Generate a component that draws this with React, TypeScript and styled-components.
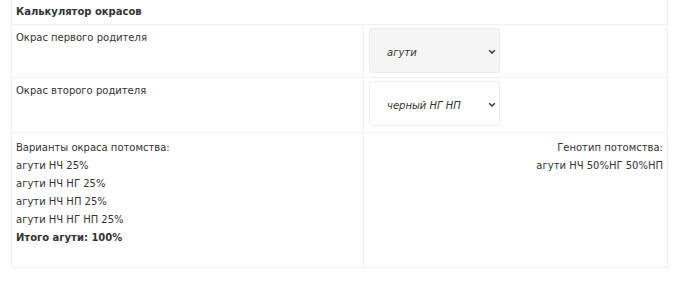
import React, { useState } from 'react';
import styled, { createGlobalStyle } from 'styled-components';

const GlobalStyle = createGlobalStyle`
  body {
    margin: 0;
    background: #ffffff;
    font-family: "DejaVu Sans", Verdana, sans-serif;
    color: #333333;
  }
`;

const Page = styled.div`
  padding: 0 14px 0 11px;
`;

const Table = styled.table`
  width: 657px;
  border-collapse: collapse;
  font-size: 10px;
  line-height: 16px;
`;

const Cell = styled.td<{ $align?: 'left' | 'right' }>`
  border: 1px solid #f0f0f0;
  padding: 5px 4px 4px;
  vertical-align: top;
  text-align: ${(p) => p.$align || 'left'};
`;

const HeadCell = styled(Cell)`
  border-top: none;
  font-weight: bold;
  padding: 4px 4px 4px;
`;

const SelectCell = styled(Cell)<{ $tall?: boolean }>`
  padding: 2px 4px ${(p) => (p.$tall ? 6 : 4)}px 5px;
  width: 294px;
`;

const SelectBox = styled.label<{ $active?: boolean }>`
  position: relative;
  display: flex;
  align-items: center;
  width: 131px;
  height: 45px;
  box-sizing: border-box;
  margin-top: 1px;
  border: 1px solid #ececec;
  border-radius: 3px;
  background: ${(p) => (p.$active ? '#f5f5f5' : '#ffffff')};
`;

const NativeSelect = styled.select`
  appearance: none;
  width: 100%;
  height: 100%;
  border: none;
  background: transparent;
  padding: 3px 20px 0 17px;
  font-family: "DejaVu Sans", Verdana, sans-serif;
  font-size: 10px;
  font-style: italic;
  color: #333333;
  outline: none;
`;

const Chevron = styled.svg`
  position: absolute;
  right: 3px;
  top: 50%;
  margin-top: -2px;
  pointer-events: none;
`;

const Lines = styled.div`
  line-height: 18px;
  padding: 1px 0 16px;
`;

const Strong = styled.div`
  font-weight: bold;
`;

const colors = ['агути', 'черный', 'черный НГ НП', 'голубой', 'белый'];

const ColorSelect = ({ value, active }: { value: string; active?: boolean }) => {
  const [v, setV] = useState(value);
  return (
    <SelectBox $active={active}>
      <NativeSelect value={v} onChange={(e) => setV(e.target.value)}>
        {colors.map((c) => (
          <option key={c} value={c}>{c}</option>
        ))}
      </NativeSelect>
      <Chevron width="8" height="6" viewBox="0 0 8 6">
        <path d="M1.2 1.3 L4 4.1 L6.8 1.3" fill="none" stroke="#333" strokeWidth="1.4" />
      </Chevron>
    </SelectBox>
  );
};

export default function App() {
  const variants = ['агути НЧ 25%', 'агути НЧ НГ 25%', 'агути НЧ НП 25%', 'агути НЧ НГ НП 25%'];
  return (
    <Page>
      <GlobalStyle />
      <Table>
        <tbody>
          <tr>
            <HeadCell colSpan={2}>Калькулятор окрасов</HeadCell>
          </tr>
          <tr>
            <Cell>Окрас первого родителя</Cell>
            <SelectCell>
              <ColorSelect value="агути" active />
            </SelectCell>
          </tr>
          <tr>
            <Cell>Окрас второго родителя</Cell>
            <SelectCell $tall>
              <ColorSelect value="черный НГ НП" />
            </SelectCell>
          </tr>
          <tr>
            <Cell>
              <Lines>
                <div>Варианты окраса потомства:</div>
                {variants.map((t) => (
                  <div key={t}>{t}</div>
                ))}
                <Strong>Итого агути: 100%</Strong>
              </Lines>
            </Cell>
            <Cell $align="right">
              <Lines>
                <div>Генотип потомства:</div>
                <div>агути НЧ 50%НГ 50%НП</div>
              </Lines>
            </Cell>
          </tr>
        </tbody>
      </Table>
    </Page>
  );
}
